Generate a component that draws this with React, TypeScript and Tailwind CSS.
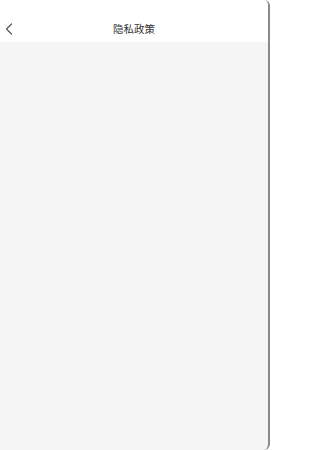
export default function App() {
  return (
    <div
      className="flex h-[450px] w-[270px] flex-col overflow-hidden rounded-tr-[6px] rounded-br-[6px] border-r-2 border-[#8a8a8a] bg-[#f5f5f5]"
      style={{ fontFamily: '"Noto Sans CJK SC", "Noto Sans", sans-serif' }}
    >
      <header className="flex h-[42px] shrink-0 items-start bg-white pt-[16px]">
        <div className="relative flex h-[26px] w-full items-center justify-center">
          <button type="button" className="absolute left-[5px] top-[7px] text-[#555]" aria-label="返回">
            <svg width="8" height="12" viewBox="0 0 8 12" fill="none" stroke="currentColor" strokeWidth="1.2" strokeLinecap="round" strokeLinejoin="round">
              <polyline points="6.5,1 1.5,6 6.5,11" />
            </svg>
          </button>
          <h1 className="text-[10.5px] leading-none text-[#333]">隐私政策</h1>
        </div>
      </header>
      <main className="flex-1" />
    </div>
  );
}
